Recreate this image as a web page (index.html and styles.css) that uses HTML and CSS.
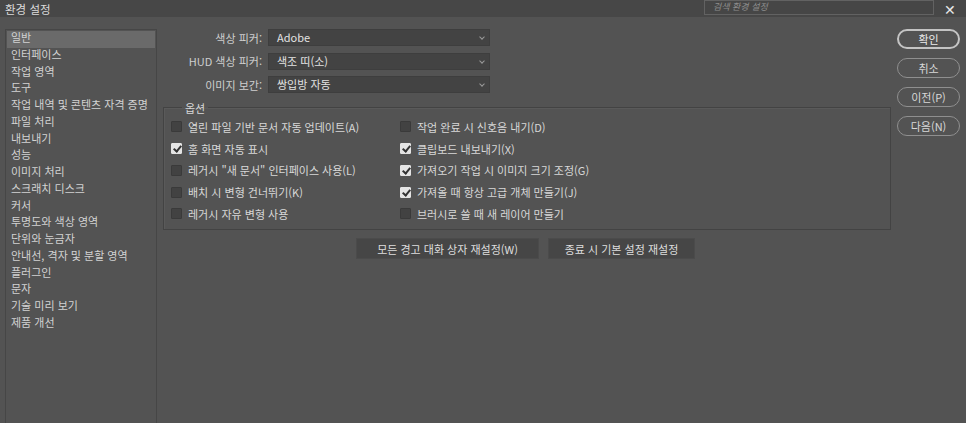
FILE: index.html
```html
<!DOCTYPE html>
<html lang="ko">
<head>
  <meta charset="UTF-8">
  <title>환경 설정</title>
  <link rel="stylesheet" href="styles.css">
</head>
<body>
  <div class="titlebar">
    <span class="title">환경 설정</span>
    <div class="search">검색 환경 설정</div>
    <span class="close">✕</span>
  </div>

  <div class="main">
    <!-- Sidebar -->
    <ul class="sidebar">
      <li class="active">일반</li>
      <li>인터페이스</li>
      <li>작업 영역</li>
      <li>도구</li>
      <li>작업 내역 및 콘텐츠 자격 증명</li>
      <li>파일 처리</li>
      <li>내보내기</li>
      <li>성능</li>
      <li>이미지 처리</li>
      <li>스크래치 디스크</li>
      <li>커서</li>
      <li>투명도와 색상 영역</li>
      <li>단위와 눈금자</li>
      <li>안내선, 격자 및 분할 영역</li>
      <li>플러그인</li>
      <li>문자</li>
      <li>기술 미리 보기</li>
      <li>제품 개선</li>
    </ul>

    <div class="content">
      <div class="field">
        <label>색상 피커:</label>
        <div class="select">Adobe<span class="caret"></span></div>
      </div>
      <div class="field">
        <label>HUD 색상 피커:</label>
        <div class="select">색조 띠(소)<span class="caret"></span></div>
      </div>
      <div class="field">
        <label>이미지 보간:</label>
        <div class="select">쌍입방 자동<span class="caret"></span></div>
      </div>

      <fieldset class="options">
        <legend>옵션</legend>
        <div class="opt-grid">
          <div class="opt"><span class="box"></span>열린 파일 기반 문서 자동 업데이트(A)</div>
          <div class="opt"><span class="box"></span>작업 완료 시 신호음 내기(D)</div>
          <div class="opt"><span class="box on"></span>홈 화면 자동 표시</div>
          <div class="opt"><span class="box on"></span>클립보드 내보내기(X)</div>
          <div class="opt"><span class="box"></span>레거시 "새 문서" 인터페이스 사용(L)</div>
          <div class="opt"><span class="box on"></span>가져오기 작업 시 이미지 크기 조정(G)</div>
          <div class="opt"><span class="box"></span>배치 시 변형 건너뛰기(K)</div>
          <div class="opt"><span class="box on"></span>가져올 때 항상 고급 개체 만들기(J)</div>
          <div class="opt"><span class="box"></span>레거시 자유 변형 사용</div>
          <div class="opt"><span class="box"></span>브러시로 쓸 때 새 레이어 만들기</div>
        </div>
      </fieldset>

      <div class="resets">
        <button class="reset wide">모든 경고 대화 상자 재설정(W)</button>
        <button class="reset">종료 시 기본 설정 재설정</button>
      </div>
    </div>

    <div class="actions">
      <button class="pill primary">확인</button>
      <button class="pill">취소</button>
      <button class="pill">이전(P)</button>
      <button class="pill">다음(N)</button>
    </div>
  </div>
</body>
</html>
```

FILE: styles.css
```css
* {
  box-sizing: border-box;
}

body {
  margin: 0;
  height: 423px;
  overflow: hidden;
  background-color: #535353;
  color: #d8d8d8;
  font-family: "Noto Sans CJK KR", "Noto Sans", sans-serif;
  font-size: 11px;
  display: flex;
  flex-direction: column;
}

/* Title bar */
.titlebar {
  height: 17px;
  background-color: #474747;
  display: flex;
  align-items: center;
  padding-left: 5px;
  flex-shrink: 0;
}

.title {
  font-size: 11.5px;
  color: #dcdcdc;
}

.search {
  margin-left: auto;
  width: 230px;
  height: 15px;
  margin-top: -3px;
  border: 1px solid #626262;
  background-color: #464646;
  color: #8e8e8e;
  font-style: italic;
  font-size: 9px;
  line-height: 12px;
  padding-left: 8px;
}

.close {
  width: 32px;
  text-align: center;
  font-size: 14px;
  color: #e8e8e8;
}

/* Main area */
.main {
  flex: 1;
  display: flex;
  padding-top: 12px;
}

.sidebar {
  list-style: none;
  margin: 0 0 0 5px;
  padding: 1px 1px;
  width: 152px;
  border: 1px solid #464646;
  border-bottom: none;
}

.sidebar li {
  height: 16.75px;
  line-height: 12.5px;
  padding-left: 4px;
  white-space: nowrap;
  color: #d2d2d2;
}

.sidebar li.active {
  background-color: #6a6a6a;
}

.content {
  width: 734px;
  padding-left: 6px;
}

.field {
  display: flex;
  align-items: center;
  height: 17px;
  margin-bottom: 6.5px;
}

.field label {
  width: 105px;
  text-align: right;
  padding-right: 6px;
  color: #cfcfcf;
}

.select {
  position: relative;
  width: 222px;
  height: 17px;
  background-color: #434343;
  border: 1px solid #3e3e3e;
  padding-left: 8px;
  line-height: 15px;
  color: #e2e2e2;
}

.caret {
  position: absolute;
  right: 5px;
  top: 5px;
  width: 4px;
  height: 4px;
  border-right: 1px solid #9a9a9a;
  border-bottom: 1px solid #9a9a9a;
  transform: rotate(45deg);
}

/* Options group */
.options {
  margin: 0;
  padding: 0.5px 0 0 7px;
  height: 130.5px;
  border: 1px solid #434343;
  box-shadow: inset 1px 1px 0 #5a5a5a;
}

.options legend {
  margin-left: 11px;
  padding: 0 3px;
  color: #d8d8d8;
}

.opt-grid {
  display: grid;
  grid-template-columns: 229px 1fr;
  grid-auto-rows: 21.75px;
}

.opt {
  display: flex;
  align-items: center;
  white-space: nowrap;
}

.box {
  width: 11px;
  height: 11px;
  margin-right: 6px;
  background-color: #424242;
  border: 1px solid #3a3a3a;
  border-radius: 1px;
  position: relative;
}

.box.on {
  background-color: #e4e4e4;
  border-color: #e4e4e4;
}

.box.on::after {
  content: "";
  position: absolute;
  left: 3px;
  top: 0px;
  width: 3px;
  height: 6px;
  border-right: 2px solid #333;
  border-bottom: 2px solid #333;
  transform: rotate(40deg);
}

.resets {
  display: flex;
  justify-content: center;
  gap: 9px;
  margin-top: 8px;
  padding-right: 3px;
}

.reset {
  height: 21px;
  width: 147px;
  background-color: #464646;
  border: 1px solid #4b4b4b;
  color: #dedede;
  font-family: inherit;
  font-size: 11px;
  padding: 0;
}

.reset.wide {
  width: 183px;
}

/* Dialog buttons */
.actions {
  display: flex;
  flex-direction: column;
  gap: 9px;
  margin-left: 6px;
}

.pill {
  width: 63px;
  height: 20px;
  border-radius: 10px;
  border: 1px solid #8f8f8f;
  background-color: #535353;
  color: #d8d8d8;
  font-family: inherit;
  font-size: 11px;
  padding: 0;
}

.pill.primary {
  border: 2px solid #c4c4c4;
  color: #ececec;
}
```
